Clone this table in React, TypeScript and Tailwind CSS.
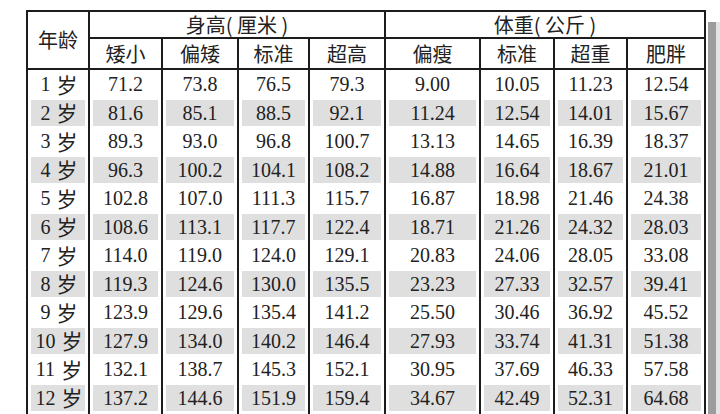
import React from "react"

// 儿童身高体重标准表 (scan look)
const rows: { age: string; h: string[]; w: string[] }[] = [
  { age: "1", h: ["71.2", "73.8", "76.5", "79.3"], w: ["9.00", "10.05", "11.23", "12.54"] },
  { age: "2", h: ["81.6", "85.1", "88.5", "92.1"], w: ["11.24", "12.54", "14.01", "15.67"] },
  { age: "3", h: ["89.3", "93.0", "96.8", "100.7"], w: ["13.13", "14.65", "16.39", "18.37"] },
  { age: "4", h: ["96.3", "100.2", "104.1", "108.2"], w: ["14.88", "16.64", "18.67", "21.01"] },
  { age: "5", h: ["102.8", "107.0", "111.3", "115.7"], w: ["16.87", "18.98", "21.46", "24.38"] },
  { age: "6", h: ["108.6", "113.1", "117.7", "122.4"], w: ["18.71", "21.26", "24.32", "28.03"] },
  { age: "7", h: ["114.0", "119.0", "124.0", "129.1"], w: ["20.83", "24.06", "28.05", "33.08"] },
  { age: "8", h: ["119.3", "124.6", "130.0", "135.5"], w: ["23.23", "27.33", "32.57", "39.41"] },
  { age: "9", h: ["123.9", "129.6", "135.4", "141.2"], w: ["25.50", "30.46", "36.92", "45.52"] },
  { age: "10", h: ["127.9", "134.0", "140.2", "146.4"], w: ["27.93", "33.74", "41.31", "51.38"] },
  { age: "11", h: ["132.1", "138.7", "145.3", "152.1"], w: ["30.95", "37.69", "46.33", "57.58"] },
  { age: "12", h: ["137.2", "144.6", "151.9", "159.4"], w: ["34.67", "42.49", "52.31", "64.68"] },
]

const colWidths = [62, 73, 76, 71, 76, 95, 74, 73, 78]

const cjk = "font-['Noto_Sans_CJK_SC',sans-serif]"
const serif = "font-['Liberation_Serif','Noto_Sans_CJK_SC',serif]"

function Cell({ children, shaded }: { children?: React.ReactNode; shaded: boolean }) {
  return (
    <td className="border-x-2 border-[#1c1c1c] p-0">
      <div
        className={`mx-[3px] my-px flex h-[26.5px] items-center justify-center ${
          shaded ? "bg-[#dfdfdf]" : "bg-white"
        }`}
      >
        {children}
      </div>
    </td>
  )
}

export default function App() {
  return (
    <div className="flex h-[414px] w-[720px] overflow-hidden bg-white text-[#222]">
      <div className="w-[26px] shrink-0" />
      <table className="mt-[10px] h-fit w-[678px] shrink-0 table-fixed border-collapse border-2 border-[#1c1c1c]">
        <colgroup>
          {colWidths.map((w, i) => (
            <col key={i} style={{ width: w }} />
          ))}
        </colgroup>
        <thead className={`${cjk} text-[20px] leading-none`}>
          <tr className="h-[27px]">
            <th rowSpan={2} className="border-2 border-[#1c1c1c] font-normal">
              年龄
            </th>
            <th colSpan={4} className="border-2 border-[#1c1c1c] font-normal">
              身高( 厘米 )
            </th>
            <th colSpan={4} className="border-2 border-[#1c1c1c] font-normal">
              体重( 公斤 )
            </th>
          </tr>
          <tr className="h-[31px]">
            {["矮小", "偏矮", "标准", "超高", "偏瘦", "标准", "超重", "肥胖"].map((t, i) => (
              <th key={i} className="border-2 border-[#1c1c1c] font-normal">
                {t}
              </th>
            ))}
          </tr>
        </thead>
        <tbody className={`${serif} text-[20px] leading-none`}>
          {rows.map((r, i) => {
            const shaded = i % 2 === 1
            return (
              <tr key={r.age}>
                <Cell shaded={shaded}>
                  <span className="flex items-center gap-[6px] pl-[2px]">
                    {r.age}
                    <span className={`${cjk} text-[21px]`}>岁</span>
                  </span>
                </Cell>
                {[...r.h, ...r.w].map((v, j) => (
                  <Cell key={j} shaded={shaded}>
                    {v}
                  </Cell>
                ))}
              </tr>
            )
          })}
          <tr>
            {colWidths.map((_, j) => (
              <Cell key={j} shaded={false} />
            ))}
          </tr>
        </tbody>
      </table>
      <div className="ml-[2px] mt-[22px] w-[8px] shrink-0 bg-[#9c9c9c]" />
      <div className="mt-[22px] w-[6px] shrink-0 bg-[#e4e4e4]" />
    </div>
  )
}
